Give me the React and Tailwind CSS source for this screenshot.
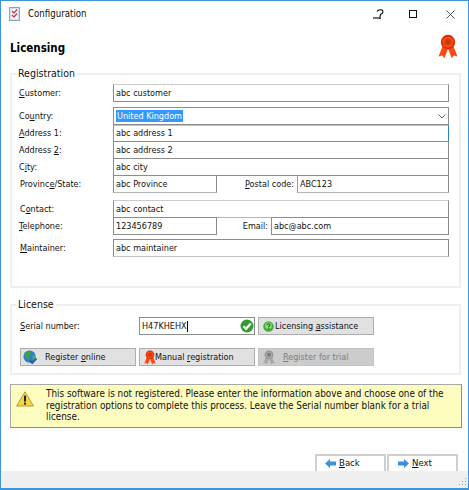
import React from 'react';

const ui = "font-['DejaVu_Sans_Condensed','DejaVu_Sans',sans-serif] text-[9px] text-[#111111]";

function Ribbon({ className, gray }) {
  const dark = gray ? '#8f8f8f' : '#d92a00';
  const light = gray ? '#a9a9a9' : '#ff4a12';
  const mid = gray ? '#7c7c7c' : '#c93a10';
  return (
    <svg viewBox="0 0 20 25" className={`shrink-0 ${className}`}>
      <path d="M5 11 L0.5 22.5 L4 21.5 L6.5 24 L10.5 13z" fill={light} />
      <path d="M15 11 L19.5 22.5 L16 21.5 L13.5 24 L9.5 13z" fill={light} />
      <path d="M10 14 L7 21 L6 23 L10.5 13z" fill={dark} />
      <circle cx="10" cy="8" r="7.2" fill={dark} />
      <circle cx="10" cy="8" r="5.6" fill={light} />
      <circle cx="10" cy="8" r="3.3" fill={mid} />
    </svg>
  );
}

function Globe({ className }) {
  return (
    <svg viewBox="0 0 16 16" className={`shrink-0 ${className}`}>
      <circle cx="7.5" cy="7.5" r="7" fill="#2e7fc9" />
      <path d="M2 4 Q5 0.5 8.5 1 L9.5 4 L7 6.5 L8 9 L5.5 12 L4 8.5 L1.5 7z" fill="#3f9e4a" />
      <path d="M11 6 L14 6.5 L13.5 10 L11 11.5z" fill="#55ad55" />
      <path d="M8 12 L10.5 15 L15.5 9.5" stroke="#1b5fa8" strokeWidth="2" fill="none" />
    </svg>
  );
}

function GreenCheck({ className }) {
  return (
    <svg viewBox="0 0 14 14" className={className}>
      <circle cx="7" cy="7" r="6.5" fill="#2f9e2f" />
      <path d="M3.4 7.2 L6 9.8 L10.8 4.4" stroke="#fff" strokeWidth="2.2" fill="none" />
    </svg>
  );
}

function HelpBadge({ className }) {
  return (
    <svg viewBox="0 0 13 13" className={`shrink-0 ${className}`}>
      <circle cx="6.5" cy="6.5" r="6.2" fill="#45ad3c" />
      <circle cx="6.5" cy="5.5" r="3.8" fill="#9adf7e" />
      <path d="M4.6 5 Q4.8 3.2 6.6 3.2 Q8.4 3.4 8.2 5 Q7.8 6 6.6 6.5 L6.6 7.6" stroke="#1d6d1d" strokeWidth="1.3" fill="none" />
      <rect x="5.9" y="8.6" width="1.5" height="1.5" fill="#1d6d1d" />
    </svg>
  );
}

function Warning({ className }) {
  return (
    <svg viewBox="0 0 18 16" className={className}>
      <path d="M9 0.8 L17.4 15 H0.6z" fill="#f5d548" stroke="#b59a3a" strokeWidth="1" strokeLinejoin="round" />
      <rect x="8" y="4.6" width="2" height="6" fill="#222" />
      <rect x="8" y="11.6" width="2" height="2" fill="#222" />
    </svg>
  );
}

function Arrow({ className, left }) {
  return (
    <svg viewBox="0 0 11 9" className={className}>
      <path d={left ? 'M0 4.5 L5 0 V2.5 H11 V6.5 H5 V9z' : 'M11 4.5 L6 0 V2.5 H0 V6.5 H6 V9z'} fill="#3f8fdc" />
    </svg>
  );
}

function Field({ children, className = '' }) {
  return (
    <div className={`h-[18px] border border-[#8c8c8c] pl-[2px] flex items-center leading-none bg-white ${className}`}>
      {children}
    </div>
  );
}

function Label({ children, className = '' }) {
  return <div className={`flex items-center leading-none whitespace-nowrap ${className}`}>{children}</div>;
}

function Row({ label, indent = 'pl-[7px]', className = '', children }) {
  return (
    <div className={`flex ${className}`}>
      <Label className={`w-[101px] shrink-0 ${indent}`}>{label}</Label>
      <div className="flex-1 min-w-0 flex">{children}</div>
    </div>
  );
}

function Button({ icon, children, disabled, className = '' }) {
  return (
    <div
      className={`h-[18px] flex items-center border leading-none whitespace-nowrap ${
        disabled ? 'bg-[#cccccc] border-[#c4c4c4] text-[#7d7d7d]' : 'bg-[#e1e1e1] border-[#adadad]'
      } ${className}`}
    >
      {icon}
      {children}
    </div>
  );
}

function GroupBox({ title, className = '', children }) {
  return (
    <section className={`relative ml-[9px] w-[451px] border-2 border-[#efefef] ${className}`}>
      <span className="absolute left-[4px] -top-[8px] bg-white px-[2px] text-[10.5px] leading-[13px]">{title}</span>
      {children}
    </section>
  );
}

export default function App() {
  return (
    <div className={`w-[469px] h-[490px] flex flex-col bg-white border border-b-2 border-[#3d95dc] overflow-hidden ${ui}`}>
      {/* Title bar */}
      <header className="h-[26px] shrink-0 flex items-center">
        <svg viewBox="0 0 11 14" className="w-[11px] h-[14px] ml-[8px]">
          <rect x="0.5" y="0.5" width="10" height="13" fill="#cfe0f2" stroke="#8aa6c6" />
          <rect x="2.5" y="2" width="6" height="10" fill="#fff" />
          <path d="M3 4 L5 6 L8 2.5 M3 8 L5 10 L8 6.5" stroke="#c8323c" strokeWidth="1.2" fill="none" />
        </svg>
        <span className="ml-[8px] text-[9.6px]">Configuration</span>
        <div className="ml-auto flex items-center">
          <svg viewBox="0 0 12 11" className="w-[12px] h-[11px] text-black">
            <path d="M4 2.5 Q5 0.6 7.5 0.7 Q10.2 1 9.8 3.2 Q9.2 4.8 7.4 5.6 L7 8.2" stroke="currentColor" strokeWidth="1.1" fill="none" />
            <path d="M0 9 H6.5" stroke="currentColor" strokeWidth="1.1" />
            <rect x="6.2" y="8.4" width="1.6" height="1.6" fill="currentColor" />
          </svg>
          <svg viewBox="0 0 8 8" className="w-[8px] h-[8px] ml-[24px]">
            <rect x="0.5" y="0.5" width="7" height="7" fill="none" stroke="#111" />
          </svg>
          <svg viewBox="0 0 9 9" className="w-[9px] h-[9px] ml-[29px] mr-[13px]">
            <path d="M0.5 0.5 L8.5 8.5 M8.5 0.5 L0.5 8.5" stroke="#444" strokeWidth="0.9" />
          </svg>
        </div>
      </header>

      {/* Heading */}
      <div className="h-[46px] shrink-0 flex items-center pl-[9px] pr-[10px]">
        <h1 className="font-bold text-[11.5px] leading-none text-black mt-[-3px]">Licensing</h1>
        <Ribbon className="ml-auto w-[20px] h-[25px] mt-[-8px]" />
      </div>

      <GroupBox title="Registration" className="h-[215px] shrink-0 pt-[9px] pr-[10px]">
        <Row label={<span><u>C</u>ustomer:</span>}>
          <Field className="w-full border-t-[#cccccc]">abc customer</Field>
        </Row>

        <Row label={<span>Co<u>u</u>ntry:</span>} className="mt-[5px]">
          <div className="relative w-full">
            <Field className="w-full">
              <span className="bg-[#3399ff] text-white px-[1px] h-[12px] flex items-center">United Kingdom</span>
            </Field>
            <svg viewBox="0 0 8 5" className="absolute right-[3px] top-[7px] w-[8px] h-[5px]">
              <path d="M0.5 0.5 L4 4 L7.5 0.5" stroke="#666" fill="none" />
            </svg>
          </div>
        </Row>

        <Row label={<span><u>A</u>ddress 1:</span>} className="-mt-px">
          <Field className="w-full border-t-[#99cdf0] border-t-2 border-l-[#5fa8de] border-r-[#2f7fc7]">abc address 1</Field>
        </Row>
        <Row label={<span>Address <u>2</u>:</span>} className="-mt-px">
          <Field className="w-full">abc address 2</Field>
        </Row>
        <Row label={<span>C<u>i</u>ty:</span>} className="-mt-px">
          <Field className="w-full">abc city</Field>
        </Row>
        <Row label={<span>Provinc<u>e</u>/State:</span>} indent="pl-[8px]" className="-mt-px">
          <Field className="w-[104px] border-b-[#b5b5b5]">abc Province</Field>
          <Label className="w-[80px] justify-end pr-[3px]"><span><u>P</u>ostal code:</span></Label>
          <Field className="flex-1 border-b-[#b5b5b5] border-l-[#9a9a9a]">ABC123</Field>
        </Row>

        <Row label={<span>C<u>o</u>ntact:</span>} indent="pl-[8px]" className="mt-[7px]">
          <Field className="w-full border-t-[#cccccc] border-b-[#b5b5b5]">abc contact</Field>
        </Row>
        <Row label={<span><u>T</u>elephone:</span>} className="-mt-px">
          <Field className="w-[104px]">123456789</Field>
          <Label className="w-[54px] justify-end pr-[3px]">Email:</Label>
          <Field className="flex-1">abc@abc.com</Field>
        </Row>
        <Row label={<span><u>M</u>aintainer:</span>} indent="pl-[8px]" className="mt-[4px]">
          <Field className="w-full border-b-[#c4c4c4]">abc maintainer</Field>
        </Row>
      </GroupBox>

      <GroupBox title="License" className="mt-[16px] h-[71px] shrink-0 pt-[11px] pl-[8px]">
        <div className="grid grid-cols-[116px_116px_116px] gap-x-[3px] gap-y-[13px]">
          <Label><span><u>S</u>erial number:</span></Label>
          <div className="relative">
            <Field className="border-[#2f80c8]">H47KHEHX<span className="w-px h-[11px] bg-black" /></Field>
            <GreenCheck className="absolute right-[1px] top-[2px] w-[14px] h-[14px]" />
          </div>
          <Button icon={<HelpBadge className="w-[11px] h-[11px] ml-[4px] mr-px" />}>
            <span>Licensing <u>a</u>ssistance</span>
          </Button>

          <Button icon={<Globe className="w-[14px] h-[14px] ml-[2px] mr-[8px]" />}>
            <span>Register <u>o</u>nline</span>
          </Button>
          <Button icon={<Ribbon className="w-[12px] h-[15px] ml-[4px] mr-[-1px]" />}>
            <span>Manual <u>r</u>egistration</span>
          </Button>
          <Button disabled icon={<Ribbon gray className="w-[12px] h-[15px] ml-[4px] mr-[8px]" />}>
            <span><u>R</u>egister for trial</span>
          </Button>
        </div>
      </GroupBox>

      {/* Warning banner */}
      <div className="mt-[9px] ml-[9px] w-[452px] h-[44px] shrink-0 flex bg-[#fdfdbf] border border-[#a8a8a8] border-r-[#8c8c8c] border-b-[#8c8c8c]">
        <Warning className="w-[18px] h-[16px] ml-[5px] mt-[6px] shrink-0" />
        <p className="ml-[12px] mt-[3px] leading-[11.5px] whitespace-pre-line text-[9.85px]">
          {'This software is not registered. Please enter the information above and choose one of the\nregistration options to complete this process. Leave the Serial number blank for a trial\nlicense.'}
        </p>
      </div>

      {/* Navigation */}
      <nav className="mt-auto flex justify-end gap-px pr-[10px]">
        <div className="w-[71px] h-[17px] flex items-center border-2 border-b-0 border-[#cfcfcf] leading-none text-[9.5px]">
          <Arrow left className="w-[11px] h-[9px] ml-[8px] mr-[3px]" />
          <span className="mb-px"><u>B</u>ack</span>
        </div>
        <div className="w-[71px] h-[17px] flex items-center border-2 border-b-0 border-[#cfcfcf] leading-none text-[9.5px]">
          <Arrow className="w-[11px] h-[9px] ml-[9px] mr-[3px]" />
          <span className="mb-px"><u>N</u>ext</span>
        </div>
      </nav>
      <footer className="h-[17px] shrink-0 bg-[#efefef] flex justify-end items-end">
        <svg viewBox="0 0 9 9" className="w-[9px] h-[9px] mr-px mb-[2px]">
          <path d="M7 1h1v1H7zM7 4h1v1H7zM4 4h1v1H4zM7 7h1v1H7zM4 7h1v1H4zM1 7h1v1H1z" fill="#9a9a9a" />
        </svg>
      </footer>
    </div>
  );
}
